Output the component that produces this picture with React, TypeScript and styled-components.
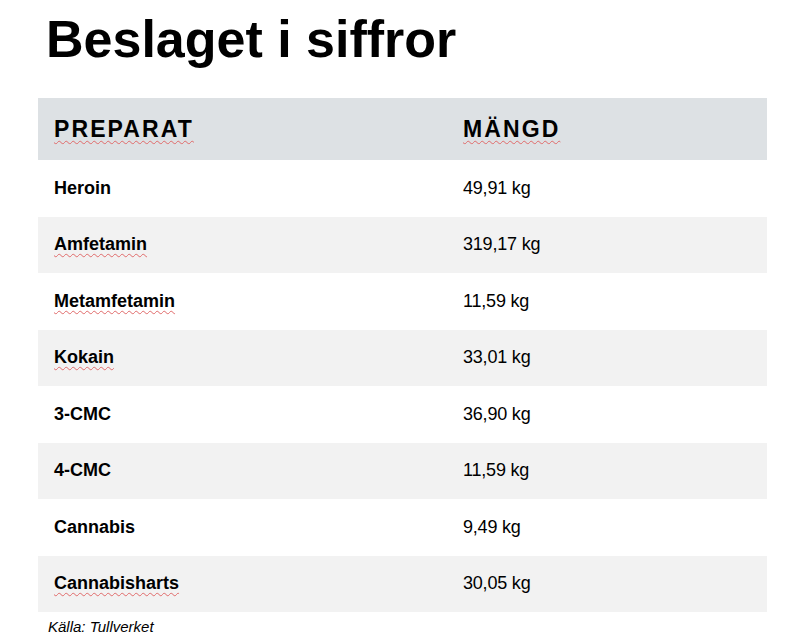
import React from "react";
import styled, { createGlobalStyle } from "styled-components";

const GlobalStyle = createGlobalStyle`
  html, body {
    margin: 0;
    padding: 0;
    background: #ffffff;
  }
  body {
    font-family: "Liberation Sans", Arial, sans-serif;
    color: #000;
  }
`;

interface SeizureRow {
  name: string;
  amount: string;
  flagged?: boolean;
}

const rows: SeizureRow[] = [
  { name: "Heroin", amount: "49,91 kg" },
  { name: "Amfetamin", amount: "319,17 kg", flagged: true },
  { name: "Metamfetamin", amount: "11,59 kg", flagged: true },
  { name: "Kokain", amount: "33,01 kg", flagged: true },
  { name: "3-CMC", amount: "36,90 kg" },
  { name: "4-CMC", amount: "11,59 kg" },
  { name: "Cannabis", amount: "9,49 kg" },
  { name: "Cannabisharts", amount: "30,05 kg", flagged: true },
];

const App = () => {
  return (
    <>
      <GlobalStyle />
      <Page>
        <Title>Beslaget i siffror</Title>

        <Table>
          <HeaderRow>
            <HeadCell><Word $flagged>PREPARAT</Word></HeadCell>
            <HeadCell><Word $flagged>MÄNGD</Word></HeadCell>
          </HeaderRow>

          {rows.map((row, i) => (
            <Row key={row.name} $striped={i % 2 === 1}>
              <NameCell><Word $flagged={row.flagged}>{row.name}</Word></NameCell>
              <AmountCell>{row.amount}</AmountCell>
            </Row>
          ))}
        </Table>

        <Source>Källa: Tullverket</Source>
      </Page>
    </>
  );
};

export default App;

const Page = styled.div`
  width: 729px;
  padding: 10px 0 0 38px;
`;

const Title = styled.h1`
  margin: 0 0 30px 8px;
  font-size: 52px;
  line-height: 58px;
  font-weight: 700;
  letter-spacing: 0;
`;

const Table = styled.div`
  display: flex;
  flex-direction: column;
  width: 729px;
`;

const HeaderRow = styled.div`
  display: grid;
  grid-template-columns: 409px 1fr;
  align-items: center;
  height: 62px;
  background: #dde1e4;
`;

const HeadCell = styled.div`
  padding-left: 16px;
  font-size: 23px;
  font-weight: 700;
  letter-spacing: 2.1px;
  line-height: 1;
`;

const Word = styled.span<{ $flagged?: boolean }>`
  text-decoration: ${(p) => (p.$flagged ? "underline wavy #e06a6a" : "none")};
  text-decoration-thickness: 1px;
  text-underline-offset: 3px;
  text-decoration-skip-ink: none;
`;

const Row = styled.div<{ $striped: boolean }>`
  display: grid;
  grid-template-columns: 409px 1fr;
  align-items: center;
  height: 56.5px;
  background: ${(p) => (p.$striped ? "#f2f2f2" : "#ffffff")};
`;

const NameCell = styled.div`
  padding-left: 16px;
  font-size: 18px;
  font-weight: 700;
`;

const AmountCell = styled.div`
  padding-left: 16px;
  font-size: 18px;
  font-weight: 400;
  letter-spacing: -0.2px;
`;

const Source = styled.p`
  margin: 6px 0 0 10px;
  font-size: 15px;
  line-height: 18px;
  font-style: italic;
`;
